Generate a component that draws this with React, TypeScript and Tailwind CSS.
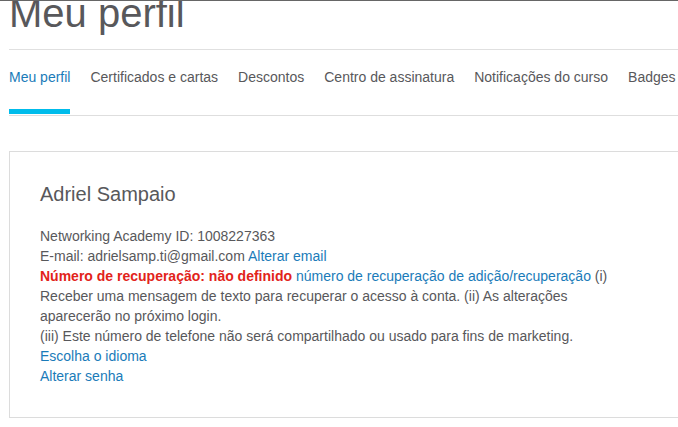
import React from "react";

const tabs = [
  "Meu perfil",
  "Certificados e cartas",
  "Descontos",
  "Centro de assinatura",
  "Notificações do curso",
  "Badges",
];

function Link({ children }: { children: React.ReactNode }) {
  return <a className="cursor-pointer text-[#1a7bb9]">{children}</a>;
}

export default function App() {
  return (
    <div
      className="h-[427px] w-full overflow-hidden border-t border-[#666666] bg-white text-[#58585b]"
      style={{ fontFamily: '"Liberation Sans", Arial, sans-serif' }}
    >
      <div className="w-[760px] pl-[9px]">
        <h1 className="-mt-[8px] text-[40px] leading-none font-normal whitespace-nowrap">
          Meu perfil
        </h1>

        <div className="mt-[16px] h-px bg-[#e0e0e0]" />

        <nav className="flex gap-[20px] border-b border-[#dedede] pt-[17px]">
          {tabs.map((tab, i) => (
            <div key={tab} className="flex flex-col">
              <span
                className={
                  "text-[14px] leading-[20px] whitespace-nowrap " +
                  (i === 0 ? "text-[#1a7bb9]" : "text-[#58585b]")
                }
              >
                {tab}
              </span>
              <span
                className={
                  "mt-[22px] mb-px h-[5px] " + (i === 0 ? "bg-[#00bceb]" : "bg-transparent")
                }
              />
            </div>
          ))}
        </nav>

        <section className="mt-[35px] border border-[#dcdcdc] px-[30px] pt-[30px] pb-[31px]">
          <h2 className="text-[20px] leading-[24px] font-normal">Adriel Sampaio</h2>
          <div className="mt-[20px] text-[14px] leading-[20px] whitespace-nowrap">
            <p>Networking Academy ID: 1008227363</p>
            <p>
              E-mail: adrielsamp.ti@gmail.com <Link>Alterar email</Link>
            </p>
            <p>
              <strong className="font-bold text-[#e2231a]">
                Número de recuperação: não definido
              </strong>{" "}
              <Link>número de recuperação de adição/recuperação</Link> (i)
            </p>
            <p>Receber uma mensagem de texto para recuperar o acesso à conta. (ii) As alterações</p>
            <p>aparecerão no próximo login.</p>
            <p>(iii) Este número de telefone não será compartilhado ou usado para fins de marketing.</p>
            <p>
              <Link>Escolha o idioma</Link>
            </p>
            <p>
              <Link>Alterar senha</Link>
            </p>
          </div>
        </section>
      </div>
    </div>
  );
}
